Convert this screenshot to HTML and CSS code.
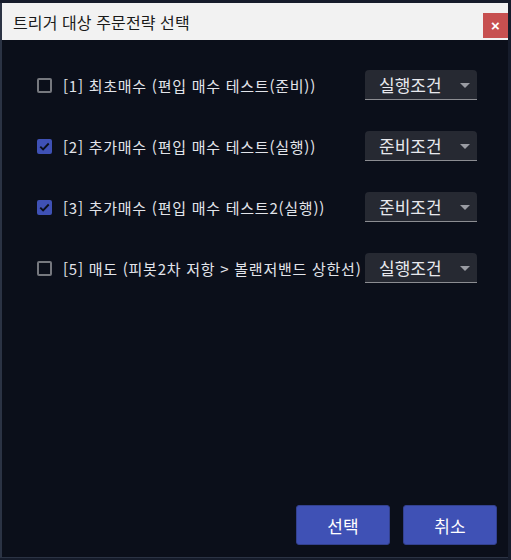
FILE: index.html
```html
<!DOCTYPE html>
<html lang="ko">
<head>
    <meta charset="UTF-8">
    <title>트리거 대상 주문전략 선택</title>
    <link rel="stylesheet" href="styles.css">
</head>
<body>
<div class="window">
    <div class="titlebar">
        <span class="title">트리거 대상 주문전략 선택</span>
        <button class="close">×</button>
    </div>

    <div class="content">
        <div class="row">
            <label class="item"><span class="check"></span>[1] 최초매수 (편입 매수 테스트(준비))</label>
            <div class="select">실행조건<span class="arrow"></span></div>
        </div>
        <div class="row">
            <label class="item"><span class="check on"><svg viewBox="0 0 16 16"><path d="M3.5 8.2l3 3 6-6.4" /></svg></span>[2] 추가매수 (편입 매수 테스트(실행))</label>
            <div class="select">준비조건<span class="arrow"></span></div>
        </div>
        <div class="row">
            <label class="item"><span class="check on"><svg viewBox="0 0 16 16"><path d="M3.5 8.2l3 3 6-6.4" /></svg></span>[3] 추가매수 (편입 매수 테스트2(실행))</label>
            <div class="select">준비조건<span class="arrow"></span></div>
        </div>
        <div class="row">
            <label class="item"><span class="check"></span>[5] 매도 (피봇2차 저항 &gt; 볼랜저밴드 상한선)</label>
            <div class="select">실행조건<span class="arrow"></span></div>
        </div>
    </div>

    <div class="footer">
        <button class="btn">선택</button>
        <button class="btn">취소</button>
    </div>
</div>
</body>
</html>
```

FILE: styles.css
```css
* { margin: 0; padding: 0; box-sizing: border-box; }
body { background: #161c2b; font-family: "Noto Sans CJK KR", "Liberation Sans", sans-serif; width: 511px; height: 560px; overflow: hidden; padding-top: 3px; }
.window { width: 508px; height: 555px; background: #0b0f1a; border-left: 2px solid #2b3344; border-bottom: 1px solid #2b3344; display: flex; flex-direction: column; }
.titlebar { height: 37px; background: #f2f2f2; display: flex; align-items: center; justify-content: space-between; padding-left: 11px; }
.title { font-size: 16px; color: #1a1a1a; letter-spacing: 0.1px; }
.close { width: 25px; height: 25px; margin-top: 8px; background: #c75050; color: #fff; border: none; font-size: 15px; font-weight: bold; line-height: 25px; font-family: "Liberation Sans", sans-serif; }
.content { flex: 1; padding: 30px 31px 0 35px; display: flex; flex-direction: column; gap: 31px; }
.row { display: flex; align-items: center; justify-content: space-between; height: 30px; }
.item { display: flex; align-items: center; font-size: 15px; letter-spacing: 0.75px; color: #e2e4ea; white-space: nowrap; }
.check { width: 15px; height: 15px; border: 2px solid #76787e; border-radius: 2px; margin-right: 11px; display: flex; }
.check.on { background: #3f51b5; border-color: #3f51b5; }
.check svg { width: 15px; height: 15px; margin: -2px; fill: none; stroke: #0b0f1a; stroke-width: 2; }
.select { width: 112px; height: 30px; flex-shrink: 0; background: #262932; border-bottom: 1px solid #8c8d92; border-radius: 4px 4px 0 0; display: flex; align-items: center; padding-left: 14px; font-size: 17px; color: #e8e9ee; position: relative; }
.arrow { position: absolute; right: 7px; top: 13px; border-left: 5px solid transparent; border-right: 5px solid transparent; border-top: 5px solid #9a9ca3; }
.footer { display: flex; justify-content: flex-end; gap: 13px; padding: 0 11px 12px 0; }
.btn { width: 94px; height: 40px; background: #3f51b5; border: 1px solid #33418f; border-radius: 3px; color: #fff; font-size: 17px; font-family: "Noto Sans CJK KR", sans-serif; }
```
